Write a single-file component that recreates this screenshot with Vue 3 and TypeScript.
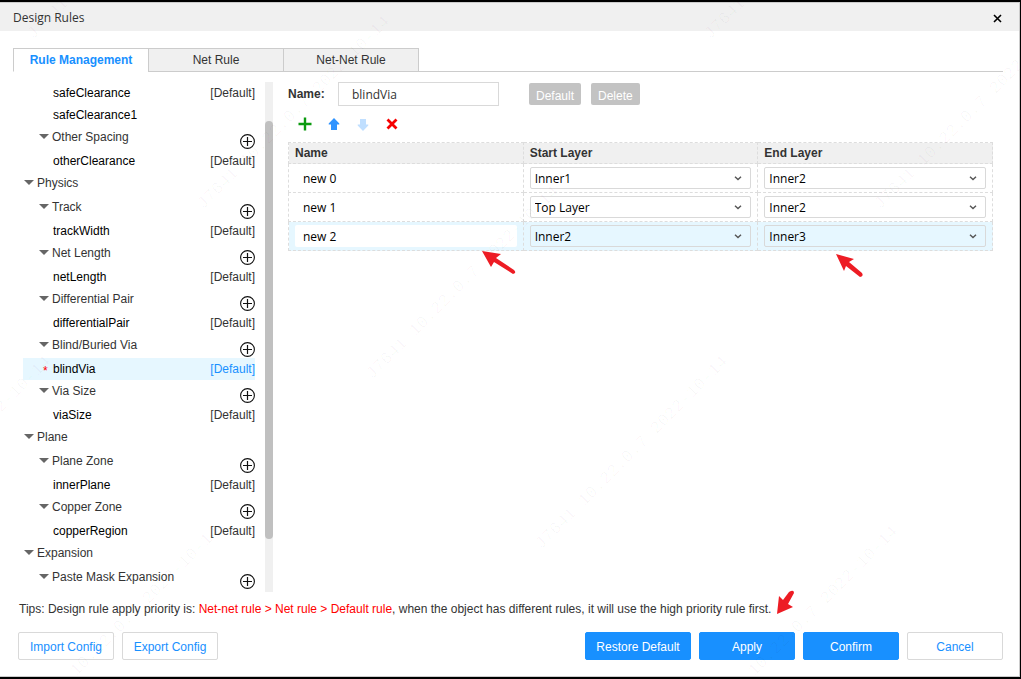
<script setup lang="ts">
import { ref } from 'vue'

interface TreeRow {
  kind: 'root' | 'group' | 'rule'
  label: string
  isDefault?: boolean
  selected?: boolean
}

interface LayerPair {
  name: string
  start: string
  end: string
}

const tabs = ['Rule Management', 'Net Rule', 'Net-Net Rule']
const activeTab = ref(0)

const group = (label: string): TreeRow => ({ kind: 'group', label })
const root = (label: string): TreeRow => ({ kind: 'root', label })
const rule = (label: string, isDefault = true, selected = false): TreeRow => ({
  kind: 'rule',
  label,
  isDefault,
  selected,
})

const tree: TreeRow[] = [
  rule('safeClearance'),
  rule('safeClearance1', false),
  group('Other Spacing'),
  rule('otherClearance'),
  root('Physics'),
  group('Track'),
  rule('trackWidth'),
  group('Net Length'),
  rule('netLength'),
  group('Differential Pair'),
  rule('differentialPair'),
  group('Blind/Buried Via'),
  rule('blindVia', true, true),
  group('Via Size'),
  rule('viaSize'),
  root('Plane'),
  group('Plane Zone'),
  rule('innerPlane'),
  group('Copper Zone'),
  rule('copperRegion'),
  root('Expansion'),
  group('Paste Mask Expansion'),
]

const ruleName = ref('blindVia')
const layers = ['Top Layer', 'Inner1', 'Inner2', 'Inner3', 'Bottom Layer']
const pairs = ref<LayerPair[]>([
  { name: 'new 0', start: 'Inner1', end: 'Inner2' },
  { name: 'new 1', start: 'Top Layer', end: 'Inner2' },
  { name: 'new 2', start: 'Inner2', end: 'Inner3' },
])
const activePair = ref(2)

const watermark = 'J7641 10.22.0.7 2022-10-14'
const marks: [number, number][] = [
  [33, 40],
  [203, 210],
  [372, 380],
  [541, 550],
  [711, 720],
  [710, 40],
  [880, 210],
  [-136, 550],
  [33, 720],
]
</script>

<template>
  <div class="dialog" role="dialog" aria-label="Design Rules">
    <header class="titlebar">
      <span>Design Rules</span>
      <button class="close" type="button" aria-label="Close">
        <svg width="9" height="9" viewBox="0 0 9 9">
          <path d="M1 1 L8 8 M8 1 L1 8" stroke="#000" stroke-width="1.6" fill="none" />
        </svg>
      </button>
    </header>

    <nav class="tabs" role="tablist">
      <button
        v-for="(tab, i) in tabs"
        :key="tab"
        class="tab"
        :class="{ active: i === activeTab }"
        type="button"
        role="tab"
        :aria-selected="i === activeTab"
        @click="activeTab = i"
      >
        {{ tab }}
      </button>
    </nav>

    <main class="content">
      <aside class="sidebar">
        <ul class="tree">
          <li
            v-for="row in tree"
            :key="row.label"
            class="row"
            :class="[row.kind, { selected: row.selected }]"
          >
            <svg v-if="row.kind !== 'rule'" class="caret" width="10" height="5" viewBox="0 0 10 5">
              <path d="M0 0 H10 L5 5 Z" fill="#666" />
            </svg>
            <span v-else class="flag">{{ row.selected ? '*' : '' }}</span>
            <span class="label">{{ row.label }}</span>
            <span v-if="row.isDefault" class="default">[Default]</span>
            <button
              v-if="row.kind === 'group'"
              class="add"
              type="button"
              :aria-label="`Add ${row.label} rule`"
            >
              <svg width="15" height="15" viewBox="0 0 15 15">
                <circle cx="7.5" cy="7.5" r="6.9" fill="none" stroke="#111" stroke-width="1.1" />
                <path d="M3 7.5 H12 M7.5 3 V12" stroke="#111" stroke-width="1.2" />
              </svg>
            </button>
          </li>
        </ul>
        <div class="scrollbar"><div class="thumb"></div></div>
      </aside>

      <section class="editor">
        <div class="name-line">
          <label for="rule-name">Name:</label>
          <input id="rule-name" v-model="ruleName" class="name-input" type="text" />
          <button class="grey" type="button">Default</button>
          <button class="grey" type="button">Delete</button>
        </div>

        <div class="toolbar">
          <button type="button" aria-label="Add">
            <svg width="14" height="14" viewBox="0 0 14 14">
              <path d="M0.5 7 H13.5 M7 0.5 V13.5" stroke="#0a9a0f" stroke-width="2.4" />
            </svg>
          </button>
          <button type="button" aria-label="Move up">
            <svg width="14" height="14" viewBox="0 0 14 14">
              <path d="M7 1 L12.3 6.5 V7.5 H10 V13 H4 V7.5 H1.7 V6.5 Z" fill="#2e93ff" />
            </svg>
          </button>
          <button type="button" aria-label="Move down">
            <svg width="14" height="14" viewBox="0 0 14 14">
              <path d="M7 14 L12.3 8.5 V7.5 H10 V2 H4 V7.5 H1.7 V8.5 Z" fill="#c0dfff" />
            </svg>
          </button>
          <button type="button" aria-label="Remove">
            <svg width="14" height="14" viewBox="0 0 14 14">
              <path d="M2.5 2.5 L11.5 11.5 M11.5 2.5 L2.5 11.5" stroke="#f60000" stroke-width="2.8" />
            </svg>
          </button>
        </div>

        <table class="layers">
          <thead>
            <tr>
              <th>Name</th>
              <th>Start Layer</th>
              <th>End Layer</th>
            </tr>
          </thead>
          <tbody>
            <tr
              v-for="(pair, i) in pairs"
              :key="i"
              :class="{ active: i === activePair }"
              @click="activePair = i"
            >
              <td><input v-model="pair.name" class="cell" type="text" aria-label="Name" /></td>
              <td>
                <div class="pick">
                  <select v-model="pair.start" class="cell" aria-label="Start Layer">
                    <option v-for="l in layers" :key="l">{{ l }}</option>
                  </select>
                  <svg class="chevron" width="8" height="5" viewBox="0 0 8 5">
                    <path d="M1 0.8 L4 3.6 L7 0.8" fill="none" stroke="#555" stroke-width="1.4" />
                  </svg>
                </div>
              </td>
              <td>
                <div class="pick">
                  <select v-model="pair.end" class="cell" aria-label="End Layer">
                    <option v-for="l in layers" :key="l">{{ l }}</option>
                  </select>
                  <svg class="chevron" width="8" height="5" viewBox="0 0 8 5">
                    <path d="M1 0.8 L4 3.6 L7 0.8" fill="none" stroke="#555" stroke-width="1.4" />
                  </svg>
                </div>
              </td>
            </tr>
          </tbody>
        </table>
      </section>
    </main>

    <p class="tips">
      Tips: Design rule apply priority is:
      <span class="priority">Net-net rule &gt; Net rule &gt; Default rule</span>, when the object has
      different rules, it will use the high priority rule first.
    </p>

    <footer class="actions">
      <button class="btn" type="button">Import Config</button>
      <button class="btn" type="button">Export Config</button>
      <span class="spacer"></span>
      <button class="btn primary wide" type="button">Restore Default</button>
      <button class="btn primary" type="button">Apply</button>
      <button class="btn primary" type="button">Confirm</button>
      <button class="btn" type="button">Cancel</button>
    </footer>

    <svg class="overlay" aria-hidden="true">
      <g class="mark">
        <text v-for="([x, y], i) in marks" :key="i" :transform="`translate(${x} ${y}) rotate(-45)`">
          {{ watermark }}
        </text>
      </g>
      <g fill="#ed1c24">
        <path d="M482 251 L501 254 L496 258 L514 270 Q517 273 513 274 L494 262 L491 267 Z" />
        <path d="M836 254 L854 259 L849 262 L862 273 Q864 276 860 277 L846 266 L844 271 Z" />
        <path d="M777 614 L779 596 L783 600 L789 592 Q794 589 794 593 L788 604 L793 607 Z" />
      </g>
    </svg>
  </div>
</template>

<style>
body {
  margin: 0;
}
</style>

<style scoped>
.dialog {
  position: relative;
  display: flex;
  flex-direction: column;
  box-sizing: border-box;
  height: 100vh;
  overflow: hidden;
  background: #fff;
  border: solid #000;
  border-width: 2px 1px 2px 0;
  box-shadow: inset 0 1px #ccc, inset -1px -1px #ccc;
  color: #333;
  font: 12px/22px "Liberation Sans", Arial, sans-serif;
}

button,
input,
select {
  box-sizing: border-box;
  margin: 0;
  padding: 0;
  border: 0;
  border-radius: 0;
  background: none;
  color: inherit;
  font: inherit;
}

button {
  cursor: pointer;
}

svg {
  display: block;
}

.titlebar {
  display: flex;
  align-items: center;
  justify-content: space-between;
  height: 28px;
  margin: 1px 1px 0 0;
  padding: 2px 17px 0 13px;
  box-sizing: border-box;
  background: #f0f0f0;
  font-family: "Open Sans", "Noto Sans", sans-serif;
}

.tabs {
  display: flex;
  margin: 17px 17px 0 13px;
  border-bottom: 1px solid #ccc;
}

.tab {
  width: 136px;
  height: 24px;
  margin: 0 -1px -1px 0;
  border: 1px solid #ccc;
  background: #f0f0f0;
}

.tab.active {
  border-bottom-color: #fff;
  background: #fff;
  color: #1890ff;
  font-weight: bold;
}

.content {
  display: flex;
  flex: 1;
  min-height: 0;
  padding: 10px 27px 0 23px;
}

.sidebar {
  display: flex;
  flex: none;
  gap: 10px;
  width: 250px;
}

.tree {
  flex: 1;
  margin: 0;
  padding: 0;
  overflow: hidden;
  list-style: none;
}

.row {
  display: flex;
  align-items: flex-start;
  height: 24px;
}

.row.rule {
  height: 22px;
  color: #000;
}

.row.selected {
  background: #e6f7ff;
}

.caret {
  margin: 8px 3px 0 1px;
}

.group .caret {
  margin-left: 16px;
}

.flag {
  box-sizing: border-box;
  width: 30px;
  padding: 2px 0 0 20px;
  color: #f00;
}

.label {
  flex: 1;
}

.default {
  color: #333;
}

.selected .default {
  color: #1890ff;
}

.add {
  align-self: flex-end;
  margin-bottom: 1px;
}

.scrollbar {
  width: 8px;
  background: #f0f0f0;
}

.thumb {
  width: 8px;
  height: 82%;
  margin-top: 39px;
  border-radius: 4px;
  background: #c0c0c0;
}

.editor {
  flex: 1;
  margin-left: 15px;
}

.name-line {
  display: flex;
  align-items: center;
  gap: 10px;
}

.name-line label {
  width: 40px;
  font-weight: bold;
}

.name-input {
  width: 161px;
  height: 24px;
  margin-right: 20px;
  padding: 0 13px;
  border: 1px solid #d9d9d9;
  font-family: "Open Sans", "Noto Sans", sans-serif;
}

.grey {
  height: 22px;
  padding: 2px 7px 0;
  border-radius: 2px;
  background: #c3c3c3;
  color: #fff;
}

.toolbar {
  display: flex;
  gap: 15px;
  padding: 11px 10px;
}

.layers {
  width: 100%;
  border-collapse: collapse;
  table-layout: fixed;
}

.layers th,
.layers td {
  border: 1px dashed #ddd;
}

.layers th {
  height: 20px;
  padding: 0 6px;
  background: #f0f0f0;
  line-height: 20px;
  text-align: left;
}

.layers td {
  padding: 3px 6px;
}

.active td {
  background: #e6f7ff;
}

.cell {
  display: block;
  width: 100%;
  height: 22px;
  padding: 2px 8px 0;
  border-radius: 2px;
  background: #fff;
  color: #000;
  font-family: "Open Sans", "Noto Sans", sans-serif;
}

.pick {
  position: relative;
}

.pick .cell {
  padding: 0 4px;
  border: 1px solid #d9d9d9;
  background: transparent;
  appearance: none;
}

.chevron {
  position: absolute;
  top: 9px;
  right: 9px;
  pointer-events: none;
}

.tips {
  margin: 6px 19px 0;
}

.priority {
  color: #f00;
}

.actions {
  display: flex;
  gap: 8px;
  padding: 12px 17px 17px 18px;
}

.btn {
  width: 96px;
  height: 28px;
  padding-top: 2px;
  border: 1px solid #d9d9d9;
  border-radius: 2px;
  background: #fff;
  color: #1890ff;
}

.primary {
  border-color: #1890ff;
  background: #1890ff;
  color: #fff;
}

.wide {
  width: 106px;
}

.spacer {
  flex: 1;
}

.overlay {
  position: absolute;
  inset: -2px 0 0 0;
  width: 100%;
  height: calc(100% + 4px);
  pointer-events: none;
}

.mark {
  fill: #000;
  fill-opacity: 0.03;
  font: 17px "Liberation Mono", monospace;
  text-rendering: geometricPrecision;
}
</style>
